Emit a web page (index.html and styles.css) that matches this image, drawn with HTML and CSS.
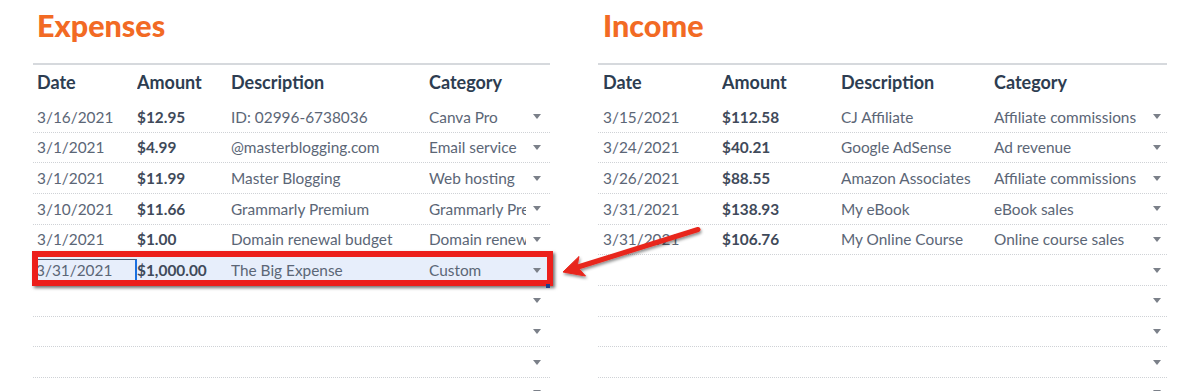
FILE: index.html
```html
<!DOCTYPE html>
<html>
<head>
<meta charset="utf-8">
<link rel="stylesheet" href="styles.css">
</head>
<body>
<div class="page">
  <section class="panel panel-exp">
    <h2 class="title">Expenses</h2>
    <div class="table">
      <div class="row head"><div>Date</div><div>Amount</div><div>Description</div><div>Category</div><div></div></div>
      <div class="row"><div>3/16/2021</div><div class="amt">$12.95</div><div>ID: 02996-6738036</div><div class="cat">Canva Pro</div><div class="dd"><span class="tri"></span></div></div>
      <div class="row"><div>3/1/2021</div><div class="amt">$4.99</div><div>@masterblogging.com</div><div class="cat">Email service</div><div class="dd"><span class="tri"></span></div></div>
      <div class="row"><div>3/1/2021</div><div class="amt">$11.99</div><div>Master Blogging</div><div class="cat">Web hosting</div><div class="dd"><span class="tri"></span></div></div>
      <div class="row"><div>3/10/2021</div><div class="amt">$11.66</div><div>Grammarly Premium</div><div class="cat">Grammarly Premium</div><div class="dd"><span class="tri"></span></div></div>
      <div class="row"><div>3/1/2021</div><div class="amt">$1.00</div><div>Domain renewal budget</div><div class="cat">Domain renewal</div><div class="dd"><span class="tri"></span></div></div>
      <div class="row selected"><div class="sel-cell">3/31/2021</div><div class="amt">$1,000.00</div><div>The Big Expense</div><div class="cat">Custom</div><div class="dd"><span class="tri"></span></div><span class="redbox"></span><span class="handle"></span></div>
      <div class="row"><div></div><div></div><div></div><div></div><div class="dd"><span class="tri"></span></div></div>
      <div class="row"><div></div><div></div><div></div><div></div><div class="dd"><span class="tri"></span></div></div>
      <div class="row"><div></div><div></div><div></div><div></div><div class="dd"><span class="tri"></span></div></div>
      <div class="row"><div></div><div></div><div></div><div></div><div class="dd"><span class="tri"></span></div></div>
    </div>
  </section>
  <section class="panel panel-inc">
    <h2 class="title">Income</h2>
    <div class="table">
      <div class="row head"><div>Date</div><div>Amount</div><div>Description</div><div>Category</div><div></div></div>
      <div class="row"><div>3/15/2021</div><div class="amt">$112.58</div><div>CJ Affiliate</div><div class="cat">Affiliate commissions</div><div class="dd"><span class="tri"></span></div></div>
      <div class="row"><div>3/24/2021</div><div class="amt">$40.21</div><div>Google AdSense</div><div class="cat">Ad revenue</div><div class="dd"><span class="tri"></span></div></div>
      <div class="row"><div>3/26/2021</div><div class="amt">$88.55</div><div>Amazon Associates</div><div class="cat">Affiliate commissions</div><div class="dd"><span class="tri"></span></div></div>
      <div class="row"><div>3/31/2021</div><div class="amt">$138.93</div><div>My eBook</div><div class="cat">eBook sales</div><div class="dd"><span class="tri"></span></div></div>
      <div class="row"><div>3/31/2021</div><div class="amt">$106.76</div><div>My Online Course</div><div class="cat">Online course sales</div><div class="dd"><span class="tri"></span></div></div>
      <div class="row"><div></div><div></div><div></div><div></div><div class="dd"><span class="tri"></span></div></div>
      <div class="row"><div></div><div></div><div></div><div></div><div class="dd"><span class="tri"></span></div></div>
      <div class="row"><div></div><div></div><div></div><div></div><div class="dd"><span class="tri"></span></div></div>
      <div class="row"><div></div><div></div><div></div><div></div><div class="dd"><span class="tri"></span></div></div>
      <div class="row"><div></div><div></div><div></div><div></div><div class="dd"><span class="tri"></span></div></div>
    </div>
  </section>
  <svg class="arrow" width="1200" height="391" viewBox="0 0 1200 391">
    <defs>
      <filter id="sh" x="-20%" y="-20%" width="140%" height="160%">
        <feDropShadow dx="1" dy="2" stdDeviation="1.5" flood-color="#000" flood-opacity="0.45"/>
      </filter>
    </defs>
    <g filter="url(#sh)" fill="#e8261c" stroke="#e8261c">
      <line x1="698" y1="229.5" x2="578" y2="267" stroke-width="5" stroke-linecap="round"/>
      <polygon points="563,272 579,256.5 577,266.5 585.5,276" stroke-width="1" stroke-linejoin="round"/>
    </g>
  </svg>
</div>
</body>
</html>
```

FILE: styles.css
```css
* { box-sizing: border-box; }
html, body { margin: 0; padding: 0; background: #fff; }
body {
  font-family: Lato, "Open Sans", "Liberation Sans", sans-serif;
  overflow: hidden;
  height: 391px;
}
.page {
  position: relative;
  display: flex;
  align-items: flex-start;
  gap: 48px;
  padding-left: 33px;
  width: 1200px;
  height: 391px;
}
.panel-exp { width: 517px; }
.panel-inc { width: 569px; }

.title {
  margin: 7px 0 0 0;
  height: 56px;
  line-height: 36px;
  font-size: 30.5px;
  font-weight: 900;
  color: #f26a24;
}
.panel-exp .title { padding-left: 4px; }
.panel-inc .title { padding-left: 5px; }

.table { border-top: 2px solid #d6d9dd; }

.row {
  position: relative;
  display: grid;
  align-items: center;
  height: 30.67px;
  border-bottom: 1px dotted #cfd2d6;
  font-size: 15.4px;
  color: #5b6676;
  white-space: nowrap;
}
.row > div { overflow: hidden; }
.panel-exp .row { grid-template-columns: 100px 94px 198px 97px 1fr; padding-left: 4px; }
.panel-inc .row { grid-template-columns: 119px 119px 153px 150px 1fr; padding-left: 5px; }

.row.head {
  height: 37px;
  padding-bottom: 3px;
  border-bottom: none;
  font-size: 18px;
  font-weight: 700;
  color: #2d3d51;
}
.amt { font-weight: 700; color: #3f4a5a; }
.cat { text-overflow: clip; }

.dd { display: flex; align-items: center; height: 100%; }
.panel-exp .dd { padding-left: 7px; }
.panel-inc .dd { padding-left: 9px; }
.tri {
  width: 0; height: 0;
  border-left: 4.5px solid transparent;
  border-right: 4.5px solid transparent;
  border-top: 5px solid #7b8089;
}

.row.selected { background: #e7eefb; }
.sel-cell {
  height: 22px;
  line-height: 21px;
  margin-left: -1px;
  padding-left: 0;
  border: 1px solid #4a5a70;
  border-left: none;
  border-right: 2px solid #1a6fe0;
}
.redbox {
  position: absolute;
  left: -1px; right: -3px; top: -4px; bottom: -1px;
  border: 6px solid #ec1f1b;
  box-shadow: 2px 2px 3px rgba(0, 0, 0, 0.55);
  pointer-events: none;
}
.handle {
  position: absolute;
  right: 0; bottom: -3px;
  width: 4px; height: 4px;
  background: #1d3f8a;
}

.arrow {
  position: absolute;
  left: 0; top: 0;
  pointer-events: none;
}
```
